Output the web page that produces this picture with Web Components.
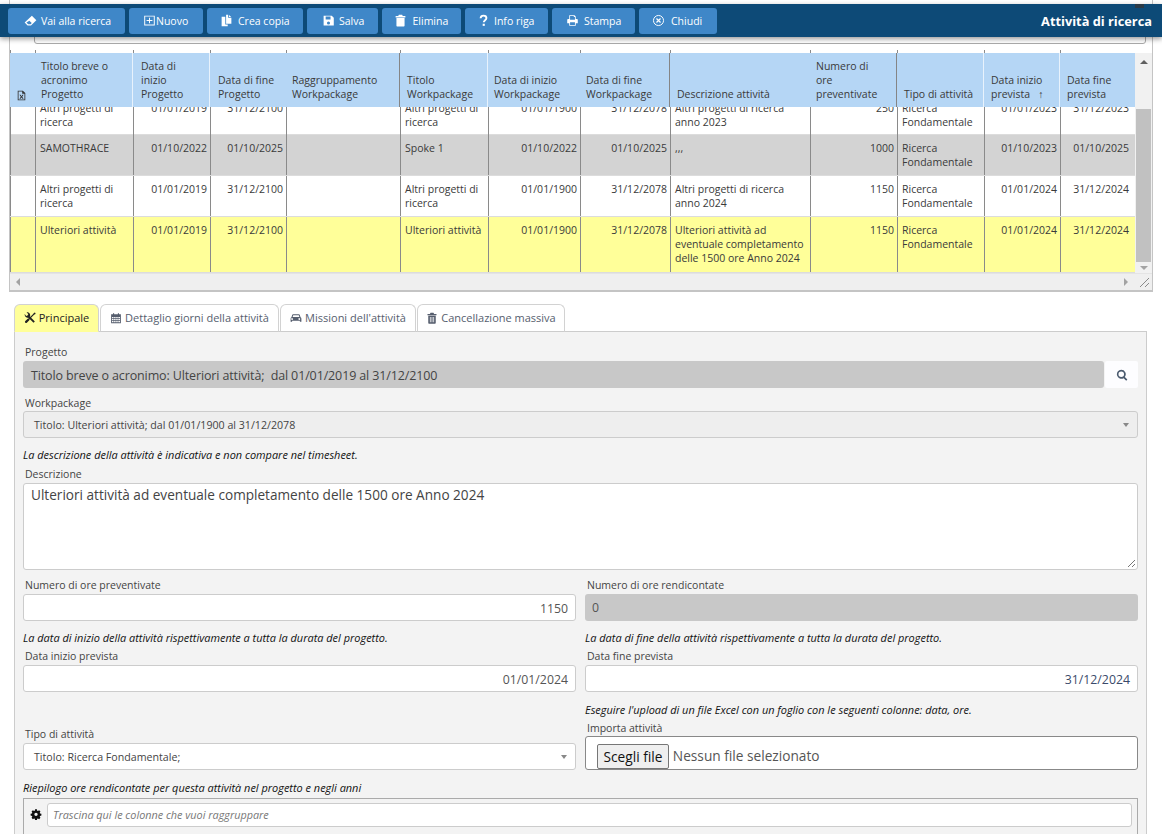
<!DOCTYPE html>
<html lang="it">
<head>
<meta charset="utf-8">
<title>Attività di ricerca</title>
<style>
  html, body { margin: 0; height: 834px; overflow: hidden; background: #fff; }
  body { font: 10.5px/14px "Open Sans", "Liberation Sans", sans-serif; color: #333; --cols: 25px 98px 77px 76px 114px 88px 92px 90px 140px 87px 87px 76px 75px; }
</style>
</head>
<body>
<app-toolbar title="Attività di ricerca">
  <tool-button icon="eraser" w="117" pad="15.5" gap="4.5">Vai alla ricerca</tool-button>
  <tool-button icon="plus" w="74" pad="13.5" gap="0.5">Nuovo</tool-button>
  <tool-button icon="copy" w="96" pad="13" gap="5">Crea copia</tool-button>
  <tool-button icon="save" w="71" pad="14.5" gap="4.5">Salva</tool-button>
  <tool-button icon="bin" w="79" pad="12" gap="5.5">Elimina</tool-button>
  <tool-button icon="question" w="83" pad="12" gap="4">Info riga</tool-button>
  <tool-button icon="print" w="83" pad="14" gap="5">Stampa</tool-button>
  <tool-button icon="close" w="78" pad="13" gap="6">Chiudi</tool-button>
</app-toolbar>

<grid-panel>
  <grid-head>
    <span class="xls"><ui-icon name="excel" size="11"></ui-icon></span>
    <span>Titolo breve o<br>acronimo<br>Progetto</span>
    <span class="w p8">Data di<br>inizio<br>Progetto</span>
    <span class="w p8">Data di fine<br>Progetto</span>
    <span>Raggruppamento<br>Workpackage</span>
    <span class="d">Titolo<br>Workpackage</span>
    <span class="w">Data di inizio<br>Workpackage</span>
    <span>Data di fine<br>Workpackage</span>
    <span class="d">Descrizione attività</span>
    <span>Numero di<br>ore<br>preventivate</span>
    <span class="d">Tipo di attività</span>
    <span class="w p7">Data inizio<br>prevista &nbsp; ↑</span>
    <span class="w p7">Data fine<br>prevista</span>
  </grid-head>
  <grid-row style="margin-top:-14px;padding-top:2px;height:39px;min-height:0">
    <span></span><span>Altri progetti di ricerca</span><span class="r">01/01/2019</span><span class="r">31/12/2100</span><span></span><span>Altri progetti di ricerca</span><span class="r">01/01/1900</span><span class="r">31/12/2078</span><span>Altri progetti di ricerca anno 2023</span><span class="r">250</span><span>Ricerca Fondamentale</span><span class="r">01/01/2023</span><span class="r e">31/12/2023</span>
  </grid-row>
  <grid-row tone="grey">
    <span></span><span>SAMOTHRACE</span><span class="r">01/10/2022</span><span class="r">01/10/2025</span><span></span><span>Spoke 1</span><span class="r">01/10/2022</span><span class="r">01/10/2025</span><span>,,,</span><span class="r">1000</span><span>Ricerca Fondamentale</span><span class="r">01/10/2023</span><span class="r e">01/10/2025</span>
  </grid-row>
  <grid-row>
    <span></span><span>Altri progetti di ricerca</span><span class="r">01/01/2019</span><span class="r">31/12/2100</span><span></span><span>Altri progetti di ricerca</span><span class="r">01/01/1900</span><span class="r">31/12/2078</span><span>Altri progetti di ricerca anno 2024</span><span class="r">1150</span><span>Ricerca Fondamentale</span><span class="r">01/01/2024</span><span class="r e">31/12/2024</span>
  </grid-row>
  <grid-row tone="yellow" style="min-height:55px">
    <span></span><span>Ulteriori attività</span><span class="r">01/01/2019</span><span class="r">31/12/2100</span><span></span><span>Ulteriori attività</span><span class="r">01/01/1900</span><span class="r">31/12/2078</span><span>Ulteriori attività ad eventuale completamento delle 1500 ore Anno 2024</span><span class="r">1150</span><span>Ricerca Fondamentale</span><span class="r">01/01/2024</span><span class="r e">31/12/2024</span>
  </grid-row>
</grid-panel>

<tab-bar>
  <tab-item icon="tools" w="85" active>Principale</tab-item>
  <tab-item icon="calendar" w="179">Dettaglio giorni della attività</tab-item>
  <tab-item icon="car" w="136">Missioni dell'attività</tab-item>
  <tab-item icon="trash" w="148">Cancellazione massiva</tab-item>
</tab-bar>

<form-panel>
  <form-field label="Progetto">
    <lookup-box>Titolo breve o acronimo: Ulteriori attività;&nbsp; dal 01/01/2019 al 31/12/2100</lookup-box>
  </form-field>
  <form-field label="Workpackage" style="margin-top:7px;--label-lh:16px">
    <select-box disabled>Titolo: Ulteriori attività; dal 01/01/1900 al 31/12/2078</select-box>
  </form-field>
  <form-field note="La descrizione della attività è indicativa e non compare nel timesheet." label="Descrizione" style="margin-top:10px;--note-gap:5px">
    <area-box>Ulteriori attività ad eventuale completamento delle 1500 ore Anno 2024</area-box>
  </form-field>
  <form-columns style="margin-top:8px">
    <form-field label="Numero di ore preventivate"><input-box align="right">1150</input-box></form-field>
    <form-field label="Numero di ore rendicontate"><input-box readonly>0</input-box></form-field>
  </form-columns>
  <form-columns style="margin-top:10px;--note-gap:4px">
    <form-field note="La data di inizio della attività rispettivamente a tutta la durata del progetto." label="Data inizio prevista"><input-box align="right">01/01/2024</input-box></form-field>
    <form-field note="La data di fine della attività rispettivamente a tutta la durata del progetto." label="Data fine prevista"><input-box align="right" tint>31/12/2024</input-box></form-field>
  </form-columns>
  <form-columns style="margin-top:11px;--note-gap:3px">
    <form-field label="Tipo di attività"><select-box>Titolo: Ricerca Fondamentale;</select-box></form-field>
    <form-field note="Eseguire l'upload di un file Excel con un foglio con le seguenti colonne: data, ore." label="Importa attività" style="--label-lh:16px"><file-box></file-box></form-field>
  </form-columns>
  <form-field note="Riepilogo ore rendicontate per questa attività nel progetto e negli anni" style="margin-top:11px;--note-gap:3px">
    <group-bar></group-bar>
  </form-field>
</form-panel>

<script>
const ICONS = {
  eraser: '<path fill-rule="evenodd" d="M9.700 2.300 15.200 7.800 8.600 14H4.400L.8 10.400zM3 10.400l2.200 2.200h2.900l1.400-1.400-2.900-2.900z"/>',
  plus: '<path fill-rule="evenodd" d="M1.500 2h13v12h-13zM2.700 3.200v9.600h10.600V3.200zM7.400 4.500h1.200v2.900h3v1.200h-3v2.900H7.400V8.600h-3V7.400h3z"/>',
  copy: '<path d="M7.500 1H10v3.600H14V12H7.500zM11 1.200 13.800 3.600H11zM2 3.500h4.500V13H9.500v2H2z"/>',
  save: '<path fill-rule="evenodd" d="M2 2h10l2.500 2.500V14H2zM4.500 3.200v3.600h6V3.200zM8 9.200a1.900 1.900 0 1 0 0 3.800 1.900 1.900 0 0 0 0-3.800z"/>',
  bin: '<path d="M6 1h4l.8 1.600H14V4.200H2V2.600h3.200zM3 5h10v9.200c0 .7-.5 1.300-1.200 1.300H4.200c-.7 0-1.200-.6-1.200-1.300z"/>',
  trash: '<path fill-rule="evenodd" d="M6 1h4l.8 1.600H14V4.200H2V2.600h3.200zM3 5h10v9.200c0 .7-.5 1.300-1.200 1.300H4.200c-.7 0-1.200-.6-1.200-1.300zM5.200 6.500v7h1v-7zM7.500 6.500v7h1v-7zM9.800 6.500v7h1v-7z"/>',
  question: '<path fill="none" stroke="currentColor" stroke-width="2.300" d="M4.400 5.200C4.600 3 6 2 8 2c2.100 0 3.600 1.200 3.600 3 0 2.600-3.300 2.700-3.300 5.300"/><rect x="7" y="12" width="2.600" height="2.600"/>',
  print: '<path fill-rule="evenodd" d="M4 1.500h6.500L12 3v3h1.500c.6 0 1 .4 1 1v4.500H12V14.500H4v-3H1.500V7c0-.6.4-1 1-1H4zM5 2.600V7h6V3.800H9.600V2.600zM5 10.200v3.200h6v-3.200z"/>',
  close: '<circle cx="8" cy="8" r="6.200" fill="none" stroke="currentColor" stroke-width="1.200"/><path fill="none" stroke="currentColor" stroke-width="1.500" d="M5.500 5.500l5 5M10.500 5.500l-5 5"/>',
  excel: '<path fill-rule="evenodd" d="M2.500 1h7.500l3.500 3.500V15h-11zM3.700 2.200v11.600h8.600V5.500H9V2.200zM5 7h1.700l1.300 2 1.300-2H11L9 9.800l2 3H9.300L8 10.900l-1.300 1.900H5l2-3z"/>',
  tools: '<path fill="none" stroke="currentColor" stroke-width="2.400" d="M5 5 13.600 13.600"/><path d="M1 2.800a4 4 0 0 0 5.300 4.500L8 5.800A4 4 0 0 0 3.400.5L5.800 2.800 4.800 4.800 2.800 5.200z"/><path fill="none" stroke="currentColor" stroke-width="1.500" d="M13.500 2.500 7 9"/><path fill="none" stroke="currentColor" stroke-width="3" stroke-linecap="round" d="M6 10 2.800 13.200"/><path d="M12.500 1.500 14.500 .5 15.500 1.500 14.500 3.500z"/>',
  calendar: '<path fill-rule="evenodd" d="M1.500 3H4V1.500h1.500V3h5V1.500H12V3h2.500v12h-13zM2.700 6.500V8h2V6.500zM5.500 6.500V8h2V6.500zM8.300 6.500V8h2V6.500zM11.100 6.500V8h2.200V6.500zM2.700 9v1.500h2V9zM5.500 9v1.500h2V9zM8.300 9v1.500h2V9zM11.100 9v1.500h2.200V9zM2.700 11.500V13.800h2v-2.300zM5.500 11.500V13.800h2v-2.300zM8.300 11.500V13.800h2v-2.300zM11.100 11.500V13.800h2.200v-2.300z"/>',
  car: '<path fill-rule="evenodd" d="M4.200 3h7.600c.6 0 1 .3 1.200.8L14 7c.7.4 1.200 1 1.200 1.900V13h-2v-1.500H2.800V13h-2V8.900C.8 8 1.300 7.400 2 7l1-3.200C3.200 3.300 3.600 3 4.200 3zM4.300 4.300 3.500 6.800h9l-.8-2.500zM3.200 8.200a1.200 1.200 0 1 0 0 2.300 1.200 1.200 0 0 0 0-2.300zM12.800 8.200a1.200 1.200 0 1 0 0 2.300 1.200 1.200 0 0 0 0-2.300z"/>',
  search: '<path fill-rule="evenodd" d="M7 1a6 6 0 0 1 4.800 9.600l3.400 3.400-1.600 1.600-3.400-3.400A6 6 0 1 1 7 1zM7 3.300a3.700 3.700 0 1 0 0 7.400 3.700 3.700 0 0 0 0-7.400z"/>',
  cog: '<path fill-rule="evenodd" d="M6.600 1h2.800l.4 2 1.100.5 1.700-1.100 2 2-1.100 1.700.5 1.100 2 .4v2.800l-2 .4-.5 1.100 1.100 1.700-2 2-1.700-1.100-1.100.5-.4 2H6.600l-.4-2-1.100-.5-1.700 1.100-2-2 1.100-1.700-.5-1.100-2-.4V7.600l2-.4.5-1.100L1.400 4.400l2-2 1.700 1.100 1.100-.5zM8 6a2.500 2.500 0 1 0 0 5 2.500 2.500 0 0 0 0-5z" transform="translate(.8 .8) scale(.9)"/>'
};

function shadow(el, html) {
  el.attachShadow({ mode: 'open' }).innerHTML = html;
}

class UiIcon extends HTMLElement {
  connectedCallback() {
    const size = this.getAttribute('size') || 13;
    shadow(this, `<style>:host{display:inline-flex;flex:none}svg{display:block;fill:currentColor}</style>
      <svg width="${size}" height="${size}" viewBox="0 0 16 16">${ICONS[this.getAttribute('name')]}</svg>`);
  }
}

class AppToolbar extends HTMLElement {
  connectedCallback() {
    shadow(this, `<style>
      :host{position:absolute;z-index:5;left:0;right:0;top:4px;height:33px;display:flex;align-items:center;
        padding:0 10px 0 8px;background:#0d4a77;box-shadow:0 2px 5px rgba(0,0,0,.4)}
      .tools{display:flex;gap:4px;flex:1}
      h1{margin:0;font-size:12.800px;font-weight:700;color:#fff}
      i{position:absolute;right:18px;top:0;width:9px;height:4px;background:#2b3a47}
    </style><div class="tools"><slot></slot></div><h1>${this.getAttribute('title')}</h1><i></i>`);
  }
}

class ToolButton extends HTMLElement {
  connectedCallback() {
    shadow(this, `<style>
      :host{display:flex;align-items:center;height:26px;width:${this.getAttribute('w')}px;box-sizing:border-box;padding-left:${this.getAttribute('pad')}px;
        gap:${this.getAttribute('gap')}px;background:#3f87c8;border-radius:3px;color:#fff;font-size:10.500px;white-space:nowrap}
    </style><ui-icon name="${this.getAttribute('icon')}" size="13"></ui-icon><slot></slot>`);
  }
}

class GridPanel extends HTMLElement {
  connectedCallback() {
    const ticks = '<i></i>'.repeat(13);
    shadow(this, `<style>
      :host{display:block;margin:0 9px;padding-top:15px;width:1144px;box-sizing:border-box;border:1px solid #c4c4c4;border-top:0;border-bottom:2px solid #c4c4c4;position:relative}
      .ticks{height:3px;padding-top:1px;display:grid;grid-template-columns:var(--cols)}
      .ticks i{border-left:1px solid #8a8a8a}
      .main{display:grid;grid-template-columns:1125px 17px;height:220px}
      .rows{overflow:hidden;height:220px;background:#fff}
      .vbar{background:#f1f1f1;display:flex;flex-direction:column;align-items:center;padding:0 1px}
      .thumb{width:15px;height:153px;margin-top:45px;background:#c1c1c1}
      .up,.down{width:0;height:0;border:4px solid transparent;margin-top:4px}
      .up{border-bottom:4px solid #606060;border-top:0;margin-top:7px}
      .down{border-top:4px solid #a3a3a3;border-bottom:0;margin-top:4px}
      .hbar{height:17px;background:#efefef;display:flex;align-items:center;border-top:1px solid #e4e4e4;box-sizing:border-box;padding:0 24px 0 6px;justify-content:space-between;position:relative}
      .l{border:4px solid transparent;border-right:4px solid #a3a3a3;border-left:0}
      .rr{border:4px solid transparent;border-left:4px solid #a3a3a3;border-right:0}
      svg{position:absolute;right:2px;bottom:2px}
    </style>
    <group-bar plain></group-bar>
    <div class="ticks">${ticks}</div>
    <div class="main">
      <div class="rows"><slot></slot></div>
      <div class="vbar"><div class="up"></div><div class="thumb"></div><div class="down"></div></div>
    </div>
    <div class="hbar"><div class="l"></div><div class="rr"></div>
      <svg width="11" height="11" viewBox="0 0 11 11" stroke="#8a8a8a" fill="none"><path d="M1 10 10 1M6 10l4-4"/></svg>
    </div>`);
  }
}

class GridHead extends HTMLElement {
  connectedCallback() {
    shadow(this, `<style>
      :host{display:grid;grid-template-columns:var(--cols);height:54px;background:#b5d6f5;color:#3a3a3a;position:relative;z-index:2;align-items:end}
      ::slotted(span){padding:0 5px 6px 6px;height:48px;display:flex;align-items:flex-end;white-space:nowrap}
      ::slotted(.w){border-left:1px solid #e8f2fc;margin-left:-1px}
      ::slotted(.d){border-left:1px solid #858585;margin-left:-1px;padding-left:7px}
      ::slotted(.p8){padding-left:8px}
      ::slotted(.p7){padding-left:7px}
      ::slotted(.xls){padding:0 0 6px 6px;color:#333}
    </style><slot></slot>`);
  }
}

class GridRow extends HTMLElement {
  connectedCallback() {
    const tone = { grey: '#d3d3d3', yellow: '#ffff99' }[this.getAttribute('tone')] || '#fff';
    shadow(this, `<style>
      :host{display:grid;grid-template-columns:var(--cols);background:${tone};border-bottom:1px solid #dcdcdc;color:#3a3a3a;min-height:40px}
      ::slotted(span){border-left:1px solid #8a8a8a;padding:6px 3px 6px 4px}
      ::slotted(.r){text-align:right}
      ::slotted(.e){padding-right:6px}
    </style><slot></slot>`);
  }
}

class TabBar extends HTMLElement {
  connectedCallback() {
    shadow(this, `<style>:host{display:flex;margin:12px 0 0 14px;gap:1px;height:28px;position:relative;z-index:1}</style><slot></slot>`);
  }
}

class TabItem extends HTMLElement {
  connectedCallback() {
    const on = this.hasAttribute('active');
    shadow(this, `<style>
      :host{display:flex;align-items:center;justify-content:center;gap:3px;width:${this.getAttribute('w')}px;height:28px;box-sizing:border-box;white-space:nowrap;font-size:11px;
        background:${on ? '#ffff99' : '#fff'};border:1px solid #d2d2d2;border-bottom:${on ? '1px solid #ffff99' : '1px solid #ccc'};border-radius:6px 6px 0 0;color:${on ? '#222' : '#565e6e'}}
    </style><ui-icon name="${this.getAttribute('icon')}" size="12"></ui-icon><slot></slot>`);
  }
}

class FormPanel extends HTMLElement {
  connectedCallback() {
    shadow(this, `<style>
      :host{display:block;margin:-1px 15px 0 14px;padding:13px 8px 0;height:503px;overflow:hidden;background:#f3f3f3;border:1px solid #ccc;border-bottom:0;box-sizing:border-box}
    </style><slot></slot>`);
  }
}

class FormColumns extends HTMLElement {
  connectedCallback() {
    shadow(this, `<style>:host{display:grid;grid-template-columns:553px 553px;column-gap:9px;align-items:end}</style><slot></slot>`);
  }
}

class FormField extends HTMLElement {
  connectedCallback() {
    const note = this.getAttribute('note');
    const label = this.getAttribute('label');
    shadow(this, `<style>
      :host{display:block}
      .note{font-style:italic;font-size:10.950px;color:#111;height:14px;margin-bottom:var(--note-gap,4px);white-space:nowrap}
      .label{height:16px;padding-left:2px;color:#444;line-height:var(--label-lh,14px)}
    </style>${note ? `<div class="note">${note}</div>` : ''}${label ? `<div class="label">${label}</div>` : ''}<slot></slot>`);
  }
}

class LookupBox extends HTMLElement {
  connectedCallback() {
    shadow(this, `<style>
      :host{display:flex;height:27px;gap:1px}
      .v{flex:1;background:#c8c8c8;border-radius:3px;padding:0 8px;font-size:12.500px;letter-spacing:-.13px;line-height:29px;color:#444}
      .b{width:33px;background:#fdfdff;display:flex;align-items:center;justify-content:center;color:#4a5a6e;border-radius:2px}
    </style><div class="v"><slot></slot></div><div class="b"><ui-icon name="search" size="12"></ui-icon></div>`);
  }
}

class SelectBox extends HTMLElement {
  connectedCallback() {
    const off = this.hasAttribute('disabled');
    shadow(this, `<style>
      :host{display:flex;align-items:center;justify-content:space-between;height:27px;box-sizing:border-box;padding:0 8px 0 10px;font-size:10.650px;
        background:${off ? '#eee' : '#fff'};border:1px solid #ccc;border-radius:3px;color:#444}
      i{width:0;height:0;border:3.500px solid transparent;border-top:4px solid #888;border-bottom:0}
    </style><span><slot></slot></span><i></i>`);
  }
}

class AreaBox extends HTMLElement {
  connectedCallback() {
    shadow(this, `<style>
      :host{display:block;position:relative;height:87px;box-sizing:border-box;padding:2px 7px;background:#fff;border:1px solid #ccc;border-radius:3px;font-size:13.600px;line-height:18px;color:#444}
      svg{position:absolute;right:1px;bottom:1px}
    </style><slot></slot><svg width="9" height="9" viewBox="0 0 9 9" stroke="#777" fill="none"><path d="M1 8 8 1M5 8l3-3"/></svg>`);
  }
}

class InputBox extends HTMLElement {
  connectedCallback() {
    const ro = this.hasAttribute('readonly');
    shadow(this, `<style>
      :host{display:block;height:27px;box-sizing:border-box;padding:0 7px;line-height:27px;font-size:12.300px;border-radius:3px;
        text-align:${this.getAttribute('align') || 'left'};color:${this.hasAttribute('tint') ? '#3a4a6a' : '#555'};
        background:${ro ? '#c8c8c8' : '#fff'};border:${ro ? 0 : '1px solid #ccc'}}
    </style><slot></slot>`);
  }
}

class FileBox extends HTMLElement {
  connectedCallback() {
    shadow(this, `<style>
      :host{display:flex;align-items:center;gap:4px;height:34px;box-sizing:border-box;padding:6px 11px 0;background:#fff;border:1px solid #888;border-radius:3px;font-size:13.700px;color:#555}
      b{font-weight:400;color:#111;background:#efefef;border:1px solid #767676;padding:0 5.500px;box-sizing:border-box;height:25px;line-height:23px;border-radius:2px}
    </style><b>Scegli file</b><span>Nessun file selezionato</span>`);
  }
}

class GroupBar extends HTMLElement {
  connectedCallback() {
    const plain = this.hasAttribute('plain');
    shadow(this, `<style>
      :host{display:flex;align-items:flex-start;gap:5px;box-sizing:border-box;color:#111;
        ${plain ? 'height:34px;padding:5px 6px 0 24px' : 'height:36px;padding:4px 5px 0 6px;border:1px solid #aaa;border-bottom:0'}}
      ui-icon{margin-top:5px}
      div{flex:1;height:24px;box-sizing:border-box;border:1px solid ${plain ? '#aaa' : '#ccc'};border-radius:3px;background:#fff;line-height:21px;padding-left:5px;font-style:italic;font-size:10.850px;color:#777}
    </style>${plain ? '<div></div>' : '<ui-icon name="cog" size="12"></ui-icon><div>Trascina qui le colonne che vuoi raggruppare</div>'}`);
  }
}

customElements.define('ui-icon', UiIcon);
customElements.define('app-toolbar', AppToolbar);
customElements.define('tool-button', ToolButton);
customElements.define('grid-panel', GridPanel);
customElements.define('grid-head', GridHead);
customElements.define('grid-row', GridRow);
customElements.define('tab-bar', TabBar);
customElements.define('tab-item', TabItem);
customElements.define('form-panel', FormPanel);
customElements.define('form-columns', FormColumns);
customElements.define('form-field', FormField);
customElements.define('lookup-box', LookupBox);
customElements.define('select-box', SelectBox);
customElements.define('area-box', AreaBox);
customElements.define('input-box', InputBox);
customElements.define('file-box', FileBox);
customElements.define('group-bar', GroupBar);
</script>
</body>
</html>
